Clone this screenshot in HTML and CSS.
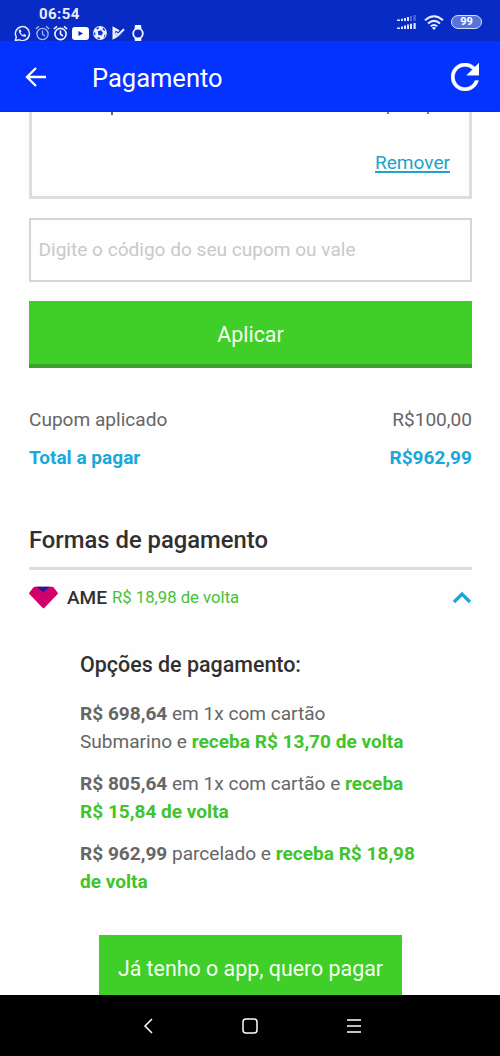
FILE: index.html
```html
<!DOCTYPE html>
<html lang="pt-BR">
<head>
<meta charset="utf-8">
<title>Pagamento</title>
<link rel="stylesheet" href="styles.css">
</head>
<body>
<div class="screen">
  <header class="status">
    <div class="status-left">
      <time class="clock">06:54</time>
      <div class="tray">
        <svg width="17" height="17" viewBox="0 0 17 17"><path d="M1.3 15.7l1-3.7a7 7 0 1 1 2.7 2.7z" fill="none" stroke="#e4edff" stroke-width="1.5"/><path d="M5.6 4.500c-1.400 1-.9 3.100.9 5s4 3 5.400 1.700l.2-1.200-2-1-1 1c-1.200-.5-2-1.400-2.500-2.500l.8-.9-.8-2z" fill="#e4edff"/></svg>
        <svg class="alarm dim" width="15" height="16" viewBox="0 0 15 16"><circle cx="7.500" cy="9" r="5.600"/><path d="M7.500 5.500V9.200L10 11M.8 4L4 1.300M14.200 4L11 1.300"/></svg>
        <svg class="alarm" width="15" height="16" viewBox="0 0 15 16"><circle cx="7.500" cy="9" r="5.600"/><path d="M7.500 5.500V9.200L10 11M.8 4L4 1.300M14.200 4L11 1.300"/></svg>
        <svg width="17" height="13" viewBox="0 0 17 13"><rect width="17" height="13" rx="3" fill="#fff"/><path d="M6.500 4l4.500 2.500-4.500 2.500z" fill="#1029b8"/></svg>
        <svg width="14" height="14" viewBox="0 0 14 14"><circle cx="7" cy="7" r="6.900" fill="#eef3ff"/><path d="M4.800 5.200L8 4.200l2 2.500-1.500 2.800-3.200-.4zM1 6l1.500 1-.3 2.500-1-.8zM3.200 2.200L5.500 1l.5 1.300-1.800 1.500zM9.800 1.500l2.400 2-.5 1.500-2-1.300zM11.500 9l1.300-.5-1.300 2.800-1 .3zM4.500 11l2.500.7v1.500l-2.500-.8z" fill="#1634bd"/></svg>
        <svg class="play" width="13" height="14" viewBox="0 0 13 14"><path d="M.5.3L7.600 4.200 6.200 6 3.600 4.800 2.600 7.200 6 10.600 12.500 7.200.5 13.800z" fill="#eef3ff"/><path d="M3.600 6.700l2.600 2.200L12 3.200" fill="none" stroke="#eef3ff" stroke-width="2"/></svg>
        <svg class="watch" width="12" height="17" viewBox="0 0 12 17"><path d="M3 0h6l.5 4h-7zM2.500 13h7l-.5 4H3z" fill="#f4f7ff"/><circle cx="6" cy="8.500" r="4.800" fill="#0a2bbd" stroke="#f4f7ff" stroke-width="1.800"/></svg>
      </div>
    </div>
    <div class="status-right">
      <svg width="20" height="15" viewBox="0 0 20 15"><g fill="#dce6ff"><path d="M0 4.500h3V6H0zM4 3.800h2V6H4zM7 3h2v3H7zM0 12.500h3V14H0zM4 11.500h2V14H4zM7 10.500h2V14H7zM10 9.500h2V14h-2zM13 8.800h2V14h-2zM16.500 8h2.200v6h-2.200z"/><path d="M10 2h2v4h-2z"/><path opacity=".35" d="M13 1h2v5h-2zM16.500 0h2.200v6h-2.200z"/></g></svg>
      <svg width="20" height="15" viewBox="0 0 20 15"><path d="M1 5.300Q10-2.700 19 5.300M4 8.500Q10 3.200 16 8.500M6.800 11.300Q10 8.700 13.200 11.300" fill="none" stroke="#e8efff" stroke-width="2"/><path d="M8 12.800q2-1.600 4 0L10 15z" fill="#fff"/></svg>
      <span class="battery">99</span>
    </div>
  </header>
  <div class="appbar">
    <svg width="22" height="22" viewBox="0 0 22 22"><path d="M21 11H2.500M11 2L2 11l9 9" fill="none" stroke="#fff" stroke-width="2.300"/></svg>
    <h1 class="title">Pagamento</h1>
    <svg width="28" height="28" viewBox="4 4 16 16"><path d="M17.650 6.350C16.200 4.900 14.210 4 12 4c-4.420 0-7.990 3.580-7.990 8s3.570 8 7.990 8c3.730 0 6.840-2.550 7.730-6h-2.080c-.82 2.330-3.040 4-5.650 4-3.310 0-6-2.690-6-6s2.690-6 6-6c1.660 0 3.140.69 4.220 1.780L13 11h7V4z" fill="#fff" stroke="#fff" stroke-width=".2"/></svg>
  </div>
  <main class="page">
    <section class="coupon-card">
      <div class="cut-row"><i class="tail"></i><i class="comma first"></i><i class="comma"></i></div>
      <a class="remove">Remover</a>
    </section>
    <div class="field">Digite o código do seu cupom ou vale</div>
    <div class="apply">Aplicar</div>
    <div class="totals">
      <div class="row"><span>Cupom aplicado</span><span>R$100,00</span></div>
      <div class="row total"><span>Total a pagar</span><span>R$962,99</span></div>
    </div>
    <h2 class="heading">Formas de pagamento</h2>
    <div class="method">
      <svg width="29" height="23" viewBox="0 0 29 23"><path d="M6 .8h17q1 0 1.700.8l3.700 4.700q.9 1.200-.2 2.300L15.500 21.800q-1 1-2 0L.8 8.600Q-.3 7.500.600 6.300L4.300 1.600Q5 .8 6 .8z" fill="#d1006c"/><path d="M7.500.8h13.500L14.300 6z" fill="#1b1a98"/></svg>
      <span class="ame">AME</span>
      <span class="cashback">R$ 18,98 de volta</span>
      <svg class="chevron" width="20" height="13" viewBox="0 0 20 13"><path d="M2 11l8-8 8 8" fill="none" stroke="#1ba4d8" stroke-width="3.200"/></svg>
    </div>
    <section class="options">
      <h3 class="subheading">Opções de pagamento:</h3>
      <p><b>R$ 698,64</b> em 1x com cartão<br>Submarino e <b class="green">receba R$ 13,70 de volta</b></p>
      <p><b>R$ 805,64</b> em 1x com cartão e <b class="green">receba<br>R$ 15,84 de volta</b></p>
      <p><b>R$ 962,99</b> parcelado e <b class="green">receba R$ 18,98<br>de volta</b></p>
    </section>
    <div class="pay">Já tenho o app, quero pagar</div>
  </main>
  <nav class="navbar">
    <svg width="12" height="18" viewBox="0 0 12 18"><path d="M10 2L3 9l7 7" fill="none" stroke="#fff" stroke-width="1.500"/></svg>
    <svg width="16" height="16" viewBox="0 0 16 16"><rect x="1" y="1" width="14" height="14" rx="3" fill="none" stroke="#fff" stroke-width="1.500"/></svg>
    <svg width="16" height="16" viewBox="0 0 16 16"><path d="M1 2h14M1 8h14M1 14h14" stroke="#fff" stroke-width="1.500"/></svg>
  </nav>
</div>
</body>
</html>
```
FILE: styles.css
```css
* { box-sizing: border-box; }
body { margin: 0; font-family: Roboto, "Liberation Sans", sans-serif; }
h1, h2, h3, p { margin: 0; }
svg { display: block; flex: none; }
span { white-space: nowrap; }
.screen { width: 500px; height: 1056px; display: flex; flex-direction: column; background: #fefefe; overflow: hidden; }

.status { height: 41px; flex: none; display: flex; justify-content: space-between; background: #082bc5; }
.status-left { padding: 6px 0 0 14px; }
.clock { display: block; margin-left: 25px; font-size: 15px; line-height: 17px; font-weight: 700; color: #e6edff; letter-spacing: 0.4px; }
.tray { display: flex; align-items: center; gap: 3.700px; height: 20px; }
.play { margin-left: 2px; }
.watch { margin-left: 3px; }
.alarm { fill: none; stroke: #f4f7ff; stroke-width: 1.600; }
.dim { stroke: #a9bdf3; stroke-width: 1.300; }
.status-right { display: flex; align-items: flex-start; gap: 7px; padding: 15px 18px 0 0; }
.battery { width: 31px; height: 14px; border: 1.500px solid #d5defa; border-radius: 7px; background: #5673dc; color: #fff; font-size: 11px; line-height: 12px; font-weight: 700; text-align: center; }

.appbar { height: 71px; flex: none; display: flex; align-items: center; padding: 1px 21px 0 25px; background: #0433ff; color: #fff; border-bottom: 1px solid #0930cf; }
.title { margin-left: 45px; flex: 1; font-size: 25.500px; line-height: 32px; font-weight: 400; padding-top: 2px; }

.page { height: 883px; flex: none; padding: 0 28px 0 29px; overflow: hidden; color: #666; font-size: 19.070px; }
.coupon-card { height: 87px; border: 3px solid #ddd; border-top: 0; padding: 0 19px 0 18px; }
.cut-row { display: flex; height: 37px; padding: 0 21px 0 61px; }
.tail { width: 2px; height: 3px; background: #666; margin-right: auto; }
.comma { width: 2px; height: 2px; background: #777; transform: skewX(-20deg); }
.comma.first { margin-right: 38px; }
.remove { display: block; text-align: right; line-height: 28px; color: #22a3cb; text-decoration: underline; text-underline-offset: 2px; text-decoration-thickness: 1.500px; }
.field { margin-top: 19px; height: 64px; border: 2px solid #d6d6d6; padding-left: 7.500px; line-height: 60px; color: #c9c9c9; }
.apply { margin-top: 19px; height: 67px; background: #40ce29; border-bottom: 4px solid #3ba02c; color: #f2ffef; font-size: 21.400px; line-height: 67px; text-align: center; }
.totals { padding-top: 33px; line-height: 38px; }
.row { display: flex; justify-content: space-between; }
.total { color: #1aa7d9; font-weight: 700; }
.heading { margin-top: 44px; height: 49px; border-bottom: 3px solid #ddd; color: #303030; font-size: 23.800px; line-height: 38px; font-weight: 500; }
.method { display: flex; align-items: center; height: 54px; }
.ame { margin-left: 9px; color: #303030; font-size: 19px; font-weight: 500; }
.cashback { margin-left: 5px; font-size: 16.700px; color: #45c136; }
.chevron { margin-left: auto; }
.options { margin-left: 51px; line-height: 28px; }
.subheading { font-size: 21.450px; line-height: 30px; font-weight: 500; color: #303030; margin: 26px 0 20px; }
.options p { margin-bottom: 13.800px; white-space: nowrap; }
.green { color: #40c42c; }
.pay { width: 303px; height: 61px; margin: 39.100px 0 0 70px; background: #40ce29; color: #f2ffef; font-size: 21.400px; line-height: 68px; text-align: center; }

.navbar { height: 61px; flex: none; padding-left: 4px; display: grid; grid-template-columns: 96px 108px 100px; justify-content: center; justify-items: center; align-items: center; background: #000; }
```
